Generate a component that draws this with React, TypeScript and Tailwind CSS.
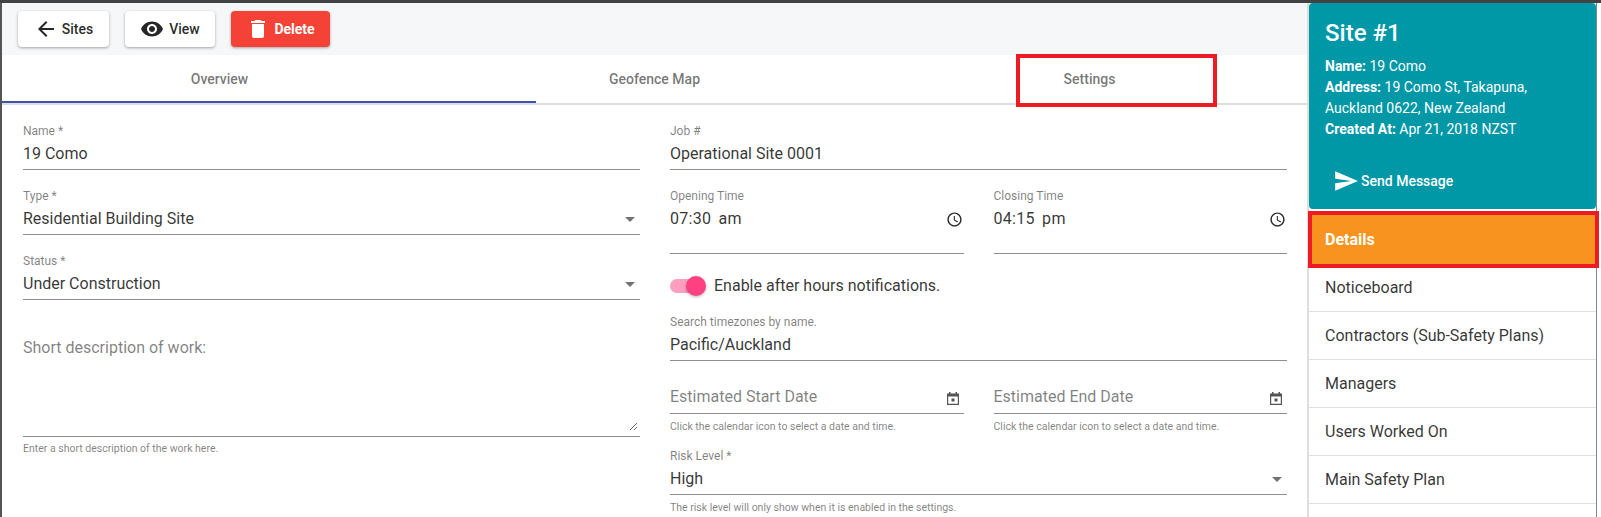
import { ReactNode } from 'react'
import { MdAccessTime, MdArrowBack, MdArrowDropDown, MdDelete, MdRemoveRedEye, MdSend } from 'react-icons/md'

const LIST_ITEMS = ['Noticeboard', 'Contractors (Sub-Safety Plans)', 'Managers', 'Users Worked On', 'Main Safety Plan', '']

function Field({ label, value, className = '', icon }: { label: string; value: string; className?: string; icon?: ReactNode }) {
  return (
    <div className={className}>
      <div className="h-[14px] text-[12px] leading-[14px] text-black/50">{label}</div>
      <div className="relative mt-[4px] flex h-[24px] items-center text-[16px] leading-[24px] text-black/80">
        <span>{value}</span>
        {icon}
      </div>
      <div className="mt-[3px] h-px bg-[#8e8e8e]" />
    </div>
  )
}

function TimeField({ label, value }: { label: string; value: string }) {
  return (
    <div>
      <div className="h-[14px] text-[12px] leading-[14px] text-black/50">{label}</div>
      <div className="mt-[4px] flex h-[24px] items-center justify-between pr-[2px] text-[16px] leading-[24px] tracking-[0.3px] text-black/80 [word-spacing:3px]">
        <span>{value}</span>
        <MdAccessTime size={17} className="mr-[-1px] text-black/85" />
      </div>
      <div className="mt-[22px] h-px bg-[#8e8e8e]" />
    </div>
  )
}

function CalendarIcon() {
  return (
    <svg width="12" height="13" viewBox="0 0 12 13" className="mt-[2px] text-[#555]">
      <path fill="currentColor" d="M2 0h1.5v1.5h5V0H10v1.5h2V13H0V1.5h2zM1.2 4.6v7.2h9.6V4.6z" />
      <rect x="4.5" y="6.5" width="3" height="3" fill="currentColor" />
    </svg>
  )
}

function DateField({ label }: { label: string }) {
  return (
    <div>
      <div className="flex h-[24px] items-center justify-between pr-[5px] text-[16px] leading-[24px] text-black/50">
        <span>{label}</span>
        <CalendarIcon />
      </div>
      <div className="mt-[4px] h-px bg-[#8e8e8e]" />
      <div className="mt-[6px] h-[14px] text-[10.5px] leading-[14px] text-black/50">
        Click the calendar icon to select a date and time.
      </div>
    </div>
  )
}

const dropArrow = <MdArrowDropDown size={24} className="absolute right-[-2px] top-0 text-black/55" />

export default function App() {
  return (
    <div className="flex h-[517px] w-[1601px] flex-col overflow-hidden bg-white font-[Roboto,sans-serif]">
      <div className="h-[3px] shrink-0 bg-[#424242]" />
      <div className="flex min-h-0 flex-1">
        {/* main panel */}
        <div className="w-[1307px] shrink-0 border-l-2 border-[#555]">
          <div className="flex h-[52px] items-center gap-4 bg-[#f6f7f9] pl-[16px]">
            <button className="flex h-[36px] w-[91px] items-center justify-center gap-[4px] rounded bg-white text-[14px] font-medium text-black/85 shadow-[0_1px_3px_rgba(0,0,0,0.35)]">
              <MdArrowBack size={24} />
              Sites
            </button>
            <button className="flex h-[36px] w-[90px] items-center justify-center gap-[5px] rounded bg-white text-[14px] font-medium text-black/85 shadow-[0_1px_3px_rgba(0,0,0,0.35)]">
              <MdRemoveRedEye size={24} />
              View
            </button>
            <button className="flex h-[36px] w-[99px] items-center justify-center gap-[4px] rounded bg-[#f44336] text-[14px] font-bold text-white shadow-[0_1px_3px_rgba(0,0,0,0.35)]">
              <MdDelete size={24} />
              Delete
            </button>
          </div>

          <div className="relative grid h-[48px] grid-cols-3 text-[14px] font-medium text-black/55">
            <div className="flex items-center justify-center">Overview</div>
            <div className="flex items-center justify-center">Geofence Map</div>
            <div className="flex items-center justify-center">Settings</div>
            <div className="absolute bottom-0 left-0 h-[2px] w-[534px] bg-[#3f51b5]" />
            <div className="absolute left-[1014px] top-[-1px] h-[53px] w-[201px] border-4 border-[#ed1c24]" />
          </div>
          <div className="h-[2px] bg-[#dedede]" />

          <div className="flex gap-[30px] pl-[21px] pt-[19px]">
            <div className="w-[617px] shrink-0">
              <Field label="Name *" value="19 Como" />
              <Field label="Type *" value="Residential Building Site" className="mt-[19px]" icon={dropArrow} />
              <Field label="Status *" value="Under Construction" className="mt-[19px]" icon={dropArrow} />
              <div className="mt-[36px] pb-[5px]">
                <textarea
                  placeholder="Short description of work:"
                  className="block h-[95px] w-[615px] bg-transparent text-[16px] leading-[24px] outline-none placeholder:text-black/50"
                />
              </div>
              <div className="h-px bg-[#8e8e8e]" />
              <div className="mt-[5px] h-[14px] text-[10.5px] leading-[14px] text-black/50">
                Enter a short description of the work here.
              </div>
            </div>

            <div className="w-[617px] shrink-0">
              <Field label="Job #" value="Operational Site 0001" />
              <div className="mt-[19px] grid grid-cols-2 gap-[30px]">
                <TimeField label="Opening Time" value="07:30 am" />
                <TimeField label="Closing Time" value="04:15 pm" />
              </div>
              <div className="mt-[22px] flex h-[20px] items-center">
                <div className="relative h-[14px] w-[34px] rounded-full bg-[#ff9fc0]">
                  <div className="absolute right-[-2px] top-[-3px] h-[20px] w-[20px] rounded-full bg-[#ff4081] shadow-[0_1px_3px_rgba(0,0,0,0.3)]" />
                </div>
                <span className="ml-[10px] text-[16px] text-black/80">Enable after hours notifications.</span>
              </div>
              <Field label="Search timezones by name." value="Pacific/Auckland" className="mt-[19px]" />
              <div className="mt-[24px] grid grid-cols-2 gap-[30px]">
                <DateField label="Estimated Start Date" />
                <DateField label="Estimated End Date" />
              </div>
              <Field label="Risk Level *" value="High" className="mt-[15px]" icon={dropArrow} />
              <div className="mt-[6px] h-[14px] text-[10.5px] leading-[14px] text-black/50">
                The risk level will only show when it is enabled in the settings.
              </div>
            </div>
          </div>
        </div>

        {/* sidebar */}
        <div className="w-[290px] shrink-0 border-l-2 border-r border-l-[#dedede] border-r-[#7d8b99]">
          <div className="h-[206px] rounded bg-[#0097a7] pl-[16px] pt-[14px] text-white">
            <div className="text-[24px] font-medium leading-[32px]">Site #1</div>
            <div className="mt-[7px] text-[14px] leading-[21px]">
              <div><b>Name:</b> 19 Como</div>
              <div><b>Address:</b> 19 Como St, Takapuna,</div>
              <div>Auckland 0622, New Zealand</div>
              <div><b>Created At:</b> Apr 21, 2018 NZST</div>
            </div>
            <div className="ml-[8px] mt-[29px] flex h-[24px] items-center gap-[2px] text-[14px] font-medium">
              <MdSend size={26} />
              Send Message
            </div>
          </div>
          <div className="relative mt-[6px] flex h-[49px] items-center bg-[#f7931e] pl-[16px] text-[16px] font-bold text-white">
            Details
            <div className="absolute left-[-1px] right-[-3px] top-[-4px] h-[57px] border-4 border-[#ed1c24]" />
          </div>
          {LIST_ITEMS.map((item, i) => (
            <div key={i} className="flex h-[48px] items-center border-b border-[#e0e0e0] pl-[16px] text-[16px] text-black/80">
              {item}
            </div>
          ))}
        </div>
      </div>
    </div>
  )
}
